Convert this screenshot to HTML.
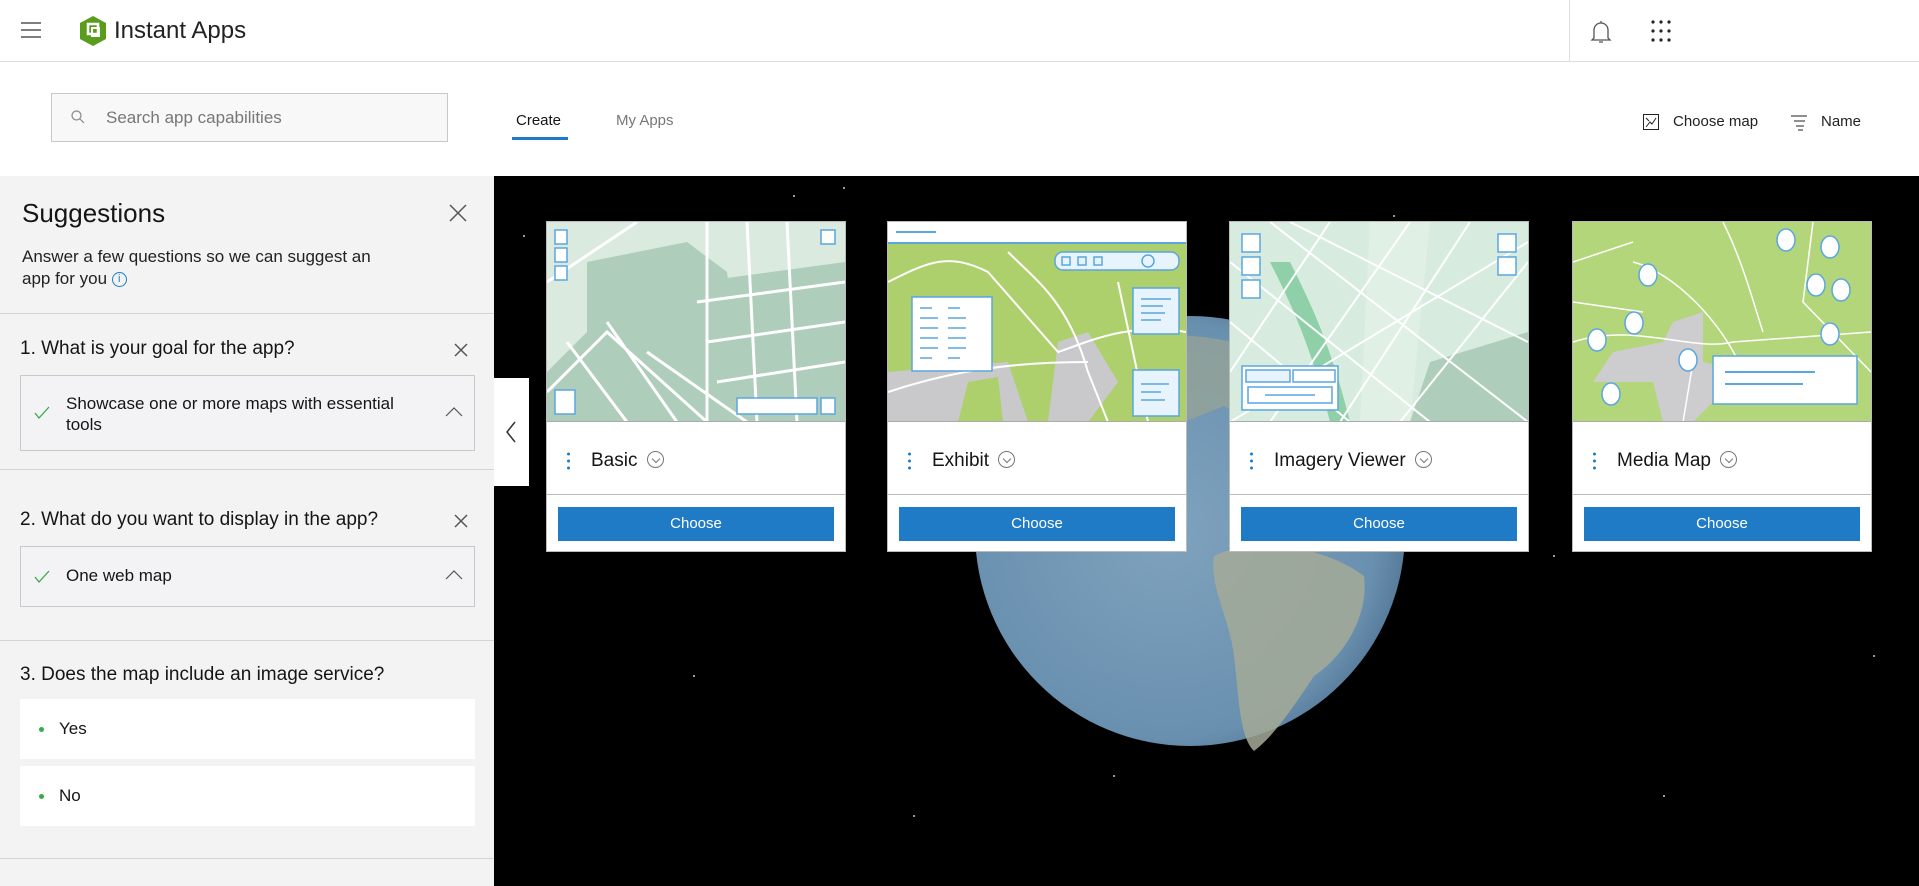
<!DOCTYPE html>
<html><head><meta charset="utf-8"><style>
*{box-sizing:border-box;margin:0;padding:0}
body{width:1919px;height:886px;overflow:hidden;background:#fff;font-family:"Liberation Sans",sans-serif;color:#151515;position:relative}
.abs{position:absolute}
.hdr{left:0;top:0;width:1919px;height:62px;border-bottom:1px solid #dcdcdc;background:#fff}
.panel{left:0;top:176px;width:494px;height:710px;background:#f3f3f3}
.space{left:494px;top:176px;width:1425px;height:710px;background:#000;overflow:hidden}
.hr{position:absolute;left:0;width:494px;height:1px;background:#d4d4d4}
.q{position:absolute;left:20px;font-size:19px;color:#151515}
.box{position:absolute;left:20px;width:455px;border:1px solid #c9c9c9;background:#f3f3f5}
.opt{position:absolute;left:20px;width:455px;height:60px;background:#fff;font-size:17px}
.card{position:absolute;top:221px;width:300px;height:331px;background:#fff;border:1px solid #bbb}
.card .img{position:absolute;left:0;top:0;width:298px;height:200px;overflow:hidden;border-bottom:1px solid #aaa}
.card .ttl{position:absolute;left:44px;top:228px;font-size:19px;color:#151515}
.card .dots{position:absolute;left:20px;top:230px;width:3px}
.card .sep{position:absolute;left:0;top:272px;width:298px;height:1px;background:#bbb}
.card .btn{position:absolute;left:11px;top:285px;width:276px;height:34px;background:#1f7bc5;color:#fff;font-size:15px;text-align:center;line-height:34px}
.xs{position:absolute;stroke:#555;stroke-width:1.5;fill:none}
.chev{display:inline-block;width:17px;height:17px;border:1px solid #777;border-radius:50%;vertical-align:-2px;margin-left:4px;position:relative}
.chev:after{content:"";position:absolute;left:5px;top:4px;width:5px;height:5px;border-right:1px solid #777;border-bottom:1px solid #777;transform:rotate(45deg)}
</style></head><body>
<div class="abs hdr">
 <svg class="abs" style="left:21px;top:21px" width="20" height="18"><path d="M0 2h20M0 9h20M0 16h20" stroke="#555" stroke-width="1.5"/></svg>
 <svg class="abs" style="left:80px;top:16px" width="26" height="30" viewBox="0 0 26 30"><path d="M13 0L26 7v16l-13 7L0 23V7z" fill="#5a9c1e"/><path d="M8 8h10v10H8z" fill="none" stroke="#fff" stroke-width="2.5"/><path d="M12 12h7v8h-7z" fill="none" stroke="#fff" stroke-width="2"/></svg>
 <div class="abs" style="left:114px;top:17px;font-size:24px;color:#222">Instant Apps</div>
 <div class="abs" style="left:1569px;top:0;width:1px;height:62px;background:#ddd"></div>
 <svg class="abs" style="left:1590px;top:19px" width="22" height="26"><path d="M4 19V11a7 7 0 0 1 14 0v8l2 2H2z M9 23h4M11 2v2" fill="none" stroke="#555" stroke-width="1.3"/></svg>
 <svg class="abs" style="left:1650px;top:20px" width="22" height="22" fill="#222"><circle cx="3" cy="2" r="1.6"/><circle cx="11" cy="2" r="1.6"/><circle cx="19" cy="2" r="1.6"/><circle cx="3" cy="11" r="1.6"/><circle cx="11" cy="11" r="1.6"/><circle cx="19" cy="11" r="1.6"/><circle cx="3" cy="20" r="1.6"/><circle cx="11" cy="20" r="1.6"/><circle cx="19" cy="20" r="1.6"/></svg>
</div>
<div class="abs" style="left:51px;top:93px;width:397px;height:49px;border:1px solid #c8c8c8;background:#f8f8f8"></div>
<svg class="abs" style="left:71px;top:110px" width="14" height="14"><circle cx="5.5" cy="5.5" r="4.5" fill="none" stroke="#888" stroke-width="1.2"/><path d="M9 9l4 4" stroke="#888" stroke-width="1.2"/></svg>
<div class="abs" style="left:106px;top:108px;font-size:17px;color:#777">Search app capabilities</div>
<div class="abs" style="left:516px;top:112px;font-size:15px;color:#151515">Create</div>
<div class="abs" style="left:512px;top:137px;width:56px;height:3px;background:#1f7bc5"></div>
<div class="abs" style="left:616px;top:112px;font-size:15px;color:#777">My Apps</div>
<svg class="abs" style="left:1643px;top:114px" width="16" height="16"><rect x="0.5" y="0.5" width="15" height="15" fill="none" stroke="#222"/><path d="M3 13l4-5 2 2 4-6M3 4l3 3" stroke="#222" fill="none"/></svg>
<div class="abs" style="left:1673px;top:113px;font-size:15px;color:#222">Choose map</div>
<svg class="abs" style="left:1791px;top:115px" width="16" height="16"><path d="M0 1h16M3 6h11M5 11h8M7 15h5" stroke="#222"/></svg>
<div class="abs" style="left:1821px;top:113px;font-size:15px;color:#222">Name</div>

<div class="abs panel">
 <div class="abs" style="left:22px;top:22px;font-size:26px;color:#151515">Suggestions</div>
 <svg class="xs" style="left:449px;top:28px" width="18" height="18"><path d="M1 1l16 16M17 1L1 17"/></svg>
 <div class="abs" style="left:22px;top:70px;font-size:17px;line-height:22px;color:#222;width:375px">Answer a few questions so we can suggest an app for you <span style="display:inline-block;width:15px;height:15px;border:1.2px solid #1f7bc5;border-radius:50%;color:#1f7bc5;font-size:11px;line-height:13px;text-align:center;vertical-align:2px">i</span></div>
 <div class="hr" style="top:137px"></div>
 <div class="q" style="top:162px">1. What is your goal for the app?</div>
 <svg class="xs" style="left:454px;top:167px" width="14" height="14"><path d="M1 1l12 12M13 1L1 13"/></svg>
 <div class="box" style="top:199px;height:76px">
  <svg class="abs" style="left:13px;top:30px" width="16" height="14"><path d="M1 7l4 5L15 1" stroke="#35ac46" fill="none" stroke-width="1.3"/></svg>
  <div class="abs" style="left:45px;top:17px;font-size:17px;line-height:21px;width:360px">Showcase one or more maps with essential tools</div>
  <svg class="abs" style="left:424px;top:31px" width="18" height="10"><path d="M1 9l8-8 8 8" stroke="#555" fill="none" stroke-width="1.2"/></svg>
 </div>
 <div class="hr" style="top:293px"></div>
 <div class="q" style="top:333px">2. What do you want to display in the app?</div>
 <svg class="xs" style="left:454px;top:338px" width="14" height="14"><path d="M1 1l12 12M13 1L1 13"/></svg>
 <div class="box" style="top:370px;height:61px">
  <svg class="abs" style="left:13px;top:23px" width="16" height="14"><path d="M1 7l4 5L15 1" stroke="#35ac46" fill="none" stroke-width="1.3"/></svg>
  <div class="abs" style="left:45px;top:19px;font-size:17px">One web map</div>
  <svg class="abs" style="left:424px;top:23px" width="18" height="10"><path d="M1 9l8-8 8 8" stroke="#555" fill="none" stroke-width="1.2"/></svg>
 </div>
 <div class="hr" style="top:464px"></div>
 <div class="q" style="top:488px">3. Does the map include an image service?</div>
 <div class="opt" style="top:523px"><span class="abs" style="left:19px;top:28px;width:5px;height:5px;border-radius:50%;background:#35ac46"></span><span class="abs" style="left:39px;top:20px">Yes</span></div>
 <div class="opt" style="top:590px"><span class="abs" style="left:19px;top:28px;width:5px;height:5px;border-radius:50%;background:#35ac46"></span><span class="abs" style="left:39px;top:20px">No</span></div>
 <div class="hr" style="top:682px"></div>
</div>

<div class="abs space">
 <svg width="1425" height="710" style="position:absolute;left:0;top:0">
  <defs><radialGradient id="g" cx="0.45" cy="0.5" r="0.6"><stop offset="0" stop-color="#7fa3bd"/><stop offset="0.8" stop-color="#6a90b0"/><stop offset="1" stop-color="#4c6d8c"/></radialGradient></defs>
  <circle cx="696" cy="355" r="215" fill="url(#g)"/>
  <path d="M720 380 C760 360 830 370 870 400 C875 440 850 480 820 500 C800 530 780 560 760 575 C745 560 745 520 740 480 C735 440 715 410 720 380Z" fill="#a4aa98" opacity="0.85"/>
  <path d="M600 170 C660 150 740 160 780 180 L790 260 L730 230 L680 250 L640 280 C610 260 600 220 600 170Z" fill="#9aa593" opacity="0.7"/>
  <g fill="#ccc"><circle cx="30" cy="60" r="1"/><circle cx="300" cy="20" r="1"/><circle cx="520" cy="90" r="1"/><circle cx="900" cy="40" r="1"/><circle cx="1300" cy="120" r="1"/><circle cx="1060" cy="380" r="1"/><circle cx="1170" cy="620" r="1"/><circle cx="200" cy="500" r="1"/><circle cx="420" cy="640" r="1"/><circle cx="1380" cy="480" r="1"/><circle cx="620" cy="600" r="1"/><circle cx="350" cy="12" r="1"/></g>
 </svg>
</div>
<div class="abs" style="left:494px;top:378px;width:35px;height:108px;background:#fff"></div>
<svg class="abs" style="left:505px;top:421px" width="12" height="22"><path d="M10 1L2 11l8 10" stroke="#333" fill="none" stroke-width="1.5"/></svg>

<!-- cards -->
<div class="card" style="left:546px"><div class="img"><svg width="298" height="200"><rect width="298" height="200" fill="#dbeadf"/><path d="M40 40 L140 20 L180 50 L200 200 L0 200 L0 150 L40 110Z" fill="#aecdbb"/><path d="M150 60 L298 40 L298 200 L150 200Z" fill="#aecdbb"/><g stroke="#fff" stroke-width="3" fill="none"><path d="M0 60 L90 0M20 120 L80 200M0 170 L60 110 L160 200M160 0 L160 200M200 0 L210 200M240 0 L250 200M150 80 L298 60M160 120 L298 100M170 160 L298 140M100 130 L200 200M60 100 L130 200"/></g><g fill="#fff" stroke="#5aa6e0" stroke-width="1.5"><rect x="8" y="8" width="12" height="14"/><rect x="8" y="26" width="12" height="14"/><rect x="8" y="44" width="12" height="14"/><rect x="274" y="8" width="14" height="14"/><rect x="8" y="168" width="20" height="24"/><rect x="190" y="176" width="80" height="16"/><rect x="274" y="176" width="14" height="16"/></g></svg></div>
 <svg class="dots" width="3" height="18"><circle cx="1.5" cy="2" r="1.5" fill="#1f7bc5"/><circle cx="1.5" cy="9" r="1.5" fill="#1f7bc5"/><circle cx="1.5" cy="16" r="1.5" fill="#1f7bc5"/></svg>
 <div class="ttl">Basic <span class="chev"></span></div><div class="sep"></div><div class="btn">Choose</div></div>

<div class="card" style="left:887px"><div class="img"><svg width="298" height="200"><rect width="298" height="200" fill="#add06c"/><rect width="298" height="21" fill="#fff"/><path d="M8 10h40" stroke="#5aa6e0" stroke-width="2"/><path d="M0 21h298" stroke="#5aa6e0" stroke-width="2"/><path d="M0 150 L120 140 L140 200 L0 200Z M170 120 L200 110 L230 160 L200 200 L160 200Z" fill="#c9c9cc"/><path d="M80 160 L110 155 L115 200 L70 200Z" fill="#add06c"/><g stroke="#fff" stroke-width="2" fill="none"><path d="M0 60 C40 40 60 30 100 50 L170 130 C200 120 240 100 298 110M120 30 C150 60 180 80 200 150 L220 200M0 170 C60 150 120 140 200 140M230 60 L260 200"/></g><g fill="#e7f3fd" stroke="#5aa6e0" stroke-width="1.5"><rect x="167" y="30" width="124" height="18" rx="8"/><rect x="24" y="75" width="80" height="74" fill="#fff"/><rect x="245" y="66" width="46" height="46"/><rect x="245" y="148" width="46" height="46"/></g><g stroke="#5aa6e0" stroke-width="1.5" fill="none"><rect x="174" y="35" width="8" height="8"/><rect x="190" y="35" width="8" height="8"/><rect x="206" y="35" width="8" height="8"/><circle cx="260" cy="39" r="6"/><path d="M32 86h12M60 86h12M32 96h18M60 96h18M32 106h18M60 106h18M32 116h18M60 116h18M32 126h18M60 126h18M32 136h12M60 136h12M253 77h30M253 84h22M253 91h24M253 98h20M253 162h28M253 170h20M253 178h24"/></g></svg></div>
 <svg class="dots" width="3" height="18"><circle cx="1.5" cy="2" r="1.5" fill="#1f7bc5"/><circle cx="1.5" cy="9" r="1.5" fill="#1f7bc5"/><circle cx="1.5" cy="16" r="1.5" fill="#1f7bc5"/></svg>
 <div class="ttl">Exhibit <span class="chev"></span></div><div class="sep"></div><div class="btn">Choose</div></div>

<div class="card" style="left:1229px"><div class="img"><svg width="298" height="200"><rect width="298" height="200" fill="#d7ecdf"/><path d="M60 40 C80 80 100 120 120 200 L100 200 C80 120 60 80 40 40Z" fill="#8fd0a8"/><path d="M200 140 L298 110 L298 200 L180 200Z" fill="#aecdbb"/><path d="M140 0 L200 0 L180 200 L130 200Z" fill="#e6f3ea" opacity="0.6"/><g stroke="#fff" stroke-width="2" fill="none"><path d="M0 40 L200 200M0 100 L120 200M40 0 L298 200M100 0 L0 150M180 0 L40 200M240 0 L110 200M298 40 L170 200M0 200 L298 20M60 0 L298 120"/></g><g fill="#fff" stroke="#5aa6e0" stroke-width="1.5"><rect x="12" y="12" width="18" height="18"/><rect x="12" y="35" width="18" height="18"/><rect x="12" y="58" width="18" height="18"/><rect x="268" y="12" width="18" height="18"/><rect x="268" y="35" width="18" height="18"/><rect x="12" y="144" width="96" height="44"/><rect x="16" y="148" width="44" height="12" fill="#e7f3fd"/><rect x="63" y="148" width="42" height="12"/><rect x="18" y="165" width="84" height="16"/></g><path d="M35 173h50" stroke="#5aa6e0" stroke-width="1.5"/></svg></div>
 <svg class="dots" width="3" height="18"><circle cx="1.5" cy="2" r="1.5" fill="#1f7bc5"/><circle cx="1.5" cy="9" r="1.5" fill="#1f7bc5"/><circle cx="1.5" cy="16" r="1.5" fill="#1f7bc5"/></svg>
 <div class="ttl">Imagery Viewer <span class="chev"></span></div><div class="sep"></div><div class="btn">Choose</div></div>

<div class="card" style="left:1572px"><div class="img"><svg width="298" height="200"><rect width="298" height="200" fill="#b3d67a"/><path d="M40 130 L90 120 L100 100 L130 90 L130 140 L170 150 L120 200 L90 200 L80 160 L20 160Z" fill="#cdcdcf"/><g stroke="#fff" stroke-width="1.5" fill="none"><path d="M0 40 L60 20M0 120 C60 100 120 130 160 120 L298 110M60 40 C100 50 150 100 170 150M150 0 C170 40 180 80 190 110M240 0 L230 80 L298 150M110 200 L120 140M0 80 L70 90"/></g><g fill="#fff" stroke="#5aa6e0" stroke-width="1.5"><ellipse cx="213" cy="18" rx="9" ry="11"/><ellipse cx="257" cy="25" rx="9" ry="11"/><ellipse cx="75" cy="53" rx="9" ry="11"/><ellipse cx="243" cy="63" rx="9" ry="11"/><ellipse cx="268" cy="68" rx="9" ry="11"/><ellipse cx="61" cy="101" rx="9" ry="11"/><ellipse cx="24" cy="118" rx="9" ry="11"/><ellipse cx="115" cy="138" rx="9" ry="11"/><ellipse cx="257" cy="112" rx="9" ry="11"/><ellipse cx="38" cy="172" rx="9" ry="11"/><rect x="140" y="134" width="144" height="48"/></g><path d="M152 150h90M152 162h78" stroke="#5aa6e0" stroke-width="2"/></svg></div>
 <svg class="dots" width="3" height="18"><circle cx="1.5" cy="2" r="1.5" fill="#1f7bc5"/><circle cx="1.5" cy="9" r="1.5" fill="#1f7bc5"/><circle cx="1.5" cy="16" r="1.5" fill="#1f7bc5"/></svg>
 <div class="ttl">Media Map <span class="chev"></span></div><div class="sep"></div><div class="btn">Choose</div></div>
</body></html>
